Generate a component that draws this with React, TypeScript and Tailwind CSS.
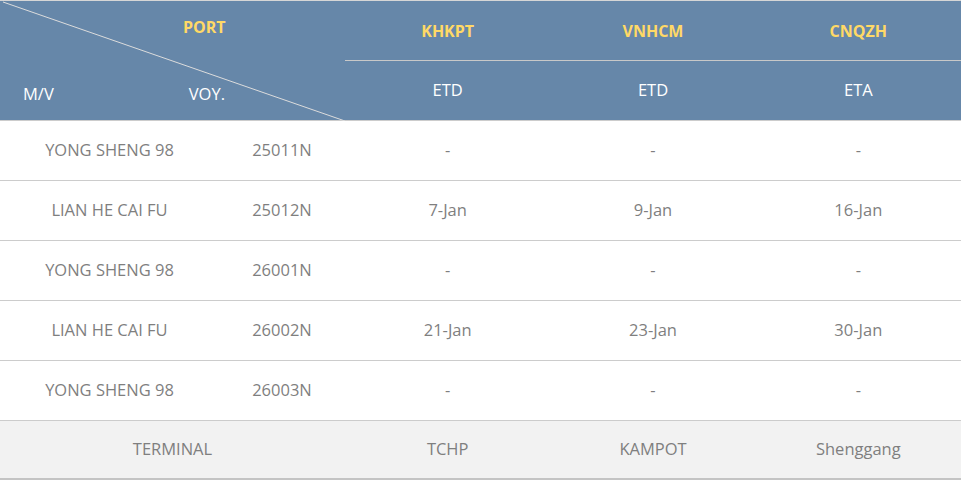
import React from "react";

const rows = [
  ["YONG SHENG 98", "25011N", "-", "-", "-"],
  ["LIAN HE CAI FU", "25012N", "7-Jan", "9-Jan", "16-Jan"],
  ["YONG SHENG 98", "26001N", "-", "-", "-"],
  ["LIAN HE CAI FU", "26002N", "21-Jan", "23-Jan", "30-Jan"],
  ["YONG SHENG 98", "26003N", "-", "-", "-"],
];

export default function App() {
  return (
    <div
      className="w-[961px] h-[481px] bg-white text-[16.5px] text-[#7f7f7f]"
      style={{ fontFamily: '"Open Sans", "Noto Sans", sans-serif' }}
    >
      {/* header */}
      <div className="flex h-[121px] bg-[#6687a9] border-t border-[#d6d6d6] border-b border-b-[#cccccc]">
        <div className="relative w-[345px] h-full flex flex-col">
          <svg className="absolute inset-0" width="345" height="120" viewBox="0 0 345 120">
            <line x1="3" y1="1" x2="345" y2="120" stroke="#dcdcdc" strokeWidth="1" />
          </svg>
          <div className="h-[52px] flex items-center pl-[183px] text-[16px] font-bold text-[#ffd966]">PORT</div>
          <div className="flex-1 flex items-center pt-[16px]">
            <span className="pl-[23px] text-white">M/V</span>
            <span className="pl-[135px] text-white">VOY.</span>
          </div>
        </div>
        <div className="flex-1 flex flex-col">
          <div className="h-[60px] grid grid-cols-3 border-b border-[#c8c8c8] text-[16px] font-bold text-[#ffd966]">
            <div className="flex items-center justify-center">KHKPT</div>
            <div className="flex items-center justify-center">VNHCM</div>
            <div className="flex items-center justify-center">CNQZH</div>
          </div>
          <div className="flex-1 grid grid-cols-3 text-white pb-[1px]">
            <div className="flex items-center justify-center">ETD</div>
            <div className="flex items-center justify-center">ETD</div>
            <div className="flex items-center justify-center">ETA</div>
          </div>
        </div>
      </div>
      {/* body */}
      {rows.map((r, i) => (
        <div
          key={i}
          className="grid grid-cols-[219px_126px_1fr_1fr_1fr] h-[60px] border-b border-[#cccccc]"
        >
          {r.map((c, j) => (
            <div key={j} className="flex items-center justify-center">
              {c}
            </div>
          ))}
        </div>
      ))}
      <div className="grid grid-cols-[345px_1fr_1fr_1fr] h-[59px] bg-[#f2f2f2] border-b-2 border-[#c4c4c4]">
        <div className="flex items-center justify-center">TERMINAL</div>
        <div className="flex items-center justify-center">TCHP</div>
        <div className="flex items-center justify-center">KAMPOT</div>
        <div className="flex items-center justify-center">Shenggang</div>
      </div>
    </div>
  );
}
